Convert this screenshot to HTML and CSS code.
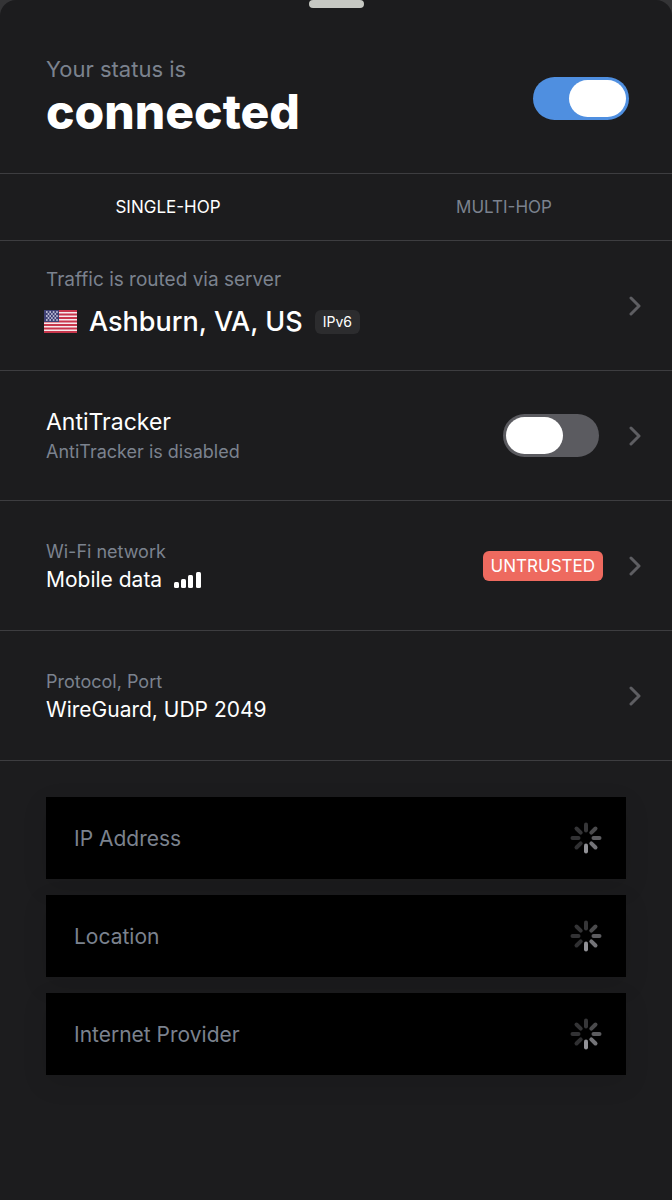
FILE: index.html
```html
<!DOCTYPE html>
<html lang="en">
<head>
    <meta charset="UTF-8">
    <meta name="viewport" content="width=device-width, initial-scale=1.0">
    <title>VPN status</title>
    <link rel="stylesheet" href="styles.css">
</head>
<body>

    <!-- shared icons -->
    <svg class="sprite" width="0" height="0" aria-hidden="true">
        <symbol id="chevron" viewBox="0 0 12 20">
            <path d="M2 2l8 8-8 8" fill="none" stroke="#5e5e62" stroke-width="3" stroke-linecap="round" stroke-linejoin="round"/>
        </symbol>
        <symbol id="spinner" viewBox="-16 -16 32 32">
            <g stroke-width="4" stroke-linecap="round">
                <path d="M0 -7.500V-13.500" stroke="#363638"/>
                <path d="M5.300 -5.300L9.500 -9.500" stroke="#4a4a4c"/>
                <path d="M7.500 0H13.500" stroke="#5c5c5f"/>
                <path d="M5.300 5.300L9.500 9.500" stroke="#747478"/>
                <path d="M0 7.500V13.500" stroke="#929297"/>
                <path d="M-5.300 5.300L-9.500 9.500" stroke="#303032"/>
                <path d="M-7.500 0H-13.500" stroke="#323234"/>
                <path d="M-5.300 -5.300L-9.500 -9.500" stroke="#343436"/>
            </g>
        </symbol>
    </svg>

    <main class="sheet">
        <div class="handle"></div>

        <header class="status">
            <div>
                <p class="status-label">Your status is</p>
                <h1>connected</h1>
            </div>
            <input type="checkbox" class="switch" aria-label="VPN connection" checked>
        </header>

        <nav class="tabs">
            <button class="tab active">SINGLE-HOP</button>
            <button class="tab">MULTI-HOP</button>
        </nav>

        <section class="row">
            <div class="info">
                <p class="caption caption-large">Traffic is routed via server</p>
                <div class="server">
                    <svg class="flag" width="33" height="23" viewBox="0 0 33 23" aria-hidden="true">
                        <rect width="33" height="23" fill="#f6e9ec"/>
                        <path d="M0 1H33M0 4.500H33M0 8H33M0 11.500H33M0 15H33M0 18.500H33M0 22H33" stroke="#c8364c" stroke-width="1.800"/>
                        <rect width="15" height="12" fill="#3f4175"/>
                        <path d="M2 2H14M2 6H14M2 10H14" stroke="#d9d9ea" stroke-width="1.600" stroke-dasharray="1.600 1.800"/>
                        <path d="M3.700 4H13M3.700 8H13" stroke="#d9d9ea" stroke-width="1.600" stroke-dasharray="1.600 1.800"/>
                    </svg>
                    <h2>Ashburn, VA, US</h2>
                    <span class="tag">IPv6</span>
                </div>
            </div>
            <button class="more" aria-label="Select server"><svg width="12" height="20"><use href="#chevron"/></svg></button>
        </section>

        <section class="row">
            <div class="info">
                <label class="title" for="antitracker">AntiTracker</label>
                <p class="caption">AntiTracker is disabled</p>
            </div>
            <input type="checkbox" class="switch" id="antitracker">
            <button class="more" aria-label="AntiTracker settings"><svg width="12" height="20"><use href="#chevron"/></svg></button>
        </section>

        <section class="row">
            <div class="info">
                <p class="caption">Wi-Fi network</p>
                <p class="value">Mobile data
                    <svg class="signal" width="28" height="18" viewBox="0 0 28 18" fill="#fff" aria-hidden="true">
                        <rect x="0" y="11" width="5" height="6" rx="1.500"/>
                        <rect x="7" y="8" width="5" height="9" rx="1.500"/>
                        <rect x="14" y="4" width="5" height="13" rx="1.500"/>
                        <rect x="22" y="1" width="5" height="16" rx="1.500"/>
                    </svg>
                </p>
            </div>
            <span class="badge">UNTRUSTED</span>
            <button class="more" aria-label="Network protection"><svg width="12" height="20"><use href="#chevron"/></svg></button>
        </section>

        <section class="row">
            <div class="info">
                <p class="caption">Protocol, Port</p>
                <p class="value">WireGuard, UDP 2049</p>
            </div>
            <button class="more" aria-label="Select protocol"><svg width="12" height="20"><use href="#chevron"/></svg></button>
        </section>

        <section class="details">
            <div class="card">IP Address <svg width="32" height="32"><use href="#spinner"/></svg></div>
            <div class="card">Location <svg width="32" height="32"><use href="#spinner"/></svg></div>
            <div class="card">Internet Provider <svg width="32" height="32"><use href="#spinner"/></svg></div>
        </section>
    </main>

</body>
</html>
```
FILE: styles.css
```css
* {
    box-sizing: border-box;
}
body {
    margin: 0;
    background-color: #343436;
    font-family: Inter, "Liberation Sans", sans-serif;
    color: #fff;
}
h1, h2, p {
    margin: 0;
}
button {
    background: none;
    border: none;
    padding: 0;
    font-family: inherit;
    cursor: pointer;
}
.sprite {
    position: absolute;
}
.sheet {
    min-height: 100vh;
    background-color: #1c1c1e;
    border-radius: 16px 16px 0 0;
}
.handle {
    width: 55px;
    height: 8px;
    margin: 0 auto;
    background-color: #c6c8c3;
    border-radius: 4px;
}
.status {
    display: flex;
    align-items: center;
    justify-content: space-between;
    padding: 47px 43px 32px 46px;
}
.status-label {
    font-size: 22px;
    line-height: 28px;
    color: #7b828e;
}
h1 {
    font-size: 48px;
    line-height: 58px;
    font-weight: 800;
}
.switch {
    appearance: none;
    flex: none;
    display: flex;
    width: 96px;
    height: 43px;
    margin: 0;
    padding: 3px;
    background-color: #5b5b60;
    border-radius: 22px;
    cursor: pointer;
}
.switch::before {
    content: "";
    width: 57px;
    background-color: #fff;
    border-radius: 19px;
}
.switch:checked {
    justify-content: flex-end;
    background-color: #4f8fe0;
}
.tabs {
    display: grid;
    grid-template-columns: 1fr 1fr;
    height: 67px;
    border-top: 1px solid #3d3d40;
}
.tab {
    font-size: 17px;
    color: #7b828e;
}
.tab.active {
    color: #fff;
}
.row {
    display: flex;
    align-items: center;
    min-height: 130px;
    padding: 0 31px 0 46px;
    border-top: 1px solid #3d3d40;
}
.info {
    flex: 1;
}
.caption {
    font-size: 18px;
    line-height: 28px;
    color: #7b828e;
}
.caption-large {
    font-size: 19px;
}
.title {
    display: block;
    font-size: 23px;
    line-height: 32px;
}
.value {
    display: flex;
    align-items: center;
    gap: 12px;
    font-size: 21px;
    line-height: 28px;
}
.server {
    display: flex;
    align-items: center;
    gap: 12px;
    margin-left: -2px;
    padding: 12px 0 8px;
}
h2 {
    font-size: 27px;
    line-height: 32px;
    font-weight: 500;
}
.tag {
    padding: 0 8px;
    background-color: #2c2c2e;
    border-radius: 6px;
    font-size: 14px;
    line-height: 24px;
}
.badge {
    margin-right: -4px;
    padding: 0 8px;
    background-color: #ee6a5f;
    border-radius: 6px;
    font-size: 17px;
    line-height: 30px;
}
.more {
    display: flex;
    margin-left: 30px;
}
.details {
    display: grid;
    gap: 16px;
    padding: 36px 46px;
    border-top: 1px solid #3d3d40;
}
.card {
    display: flex;
    align-items: center;
    justify-content: space-between;
    min-height: 82px;
    padding: 0 24px 0 28px;
    background-color: #000;
    box-shadow: 0 8px 24px rgba(0, 0, 0, 0.1);
    font-size: 21px;
    color: #7b828e;
}
```
